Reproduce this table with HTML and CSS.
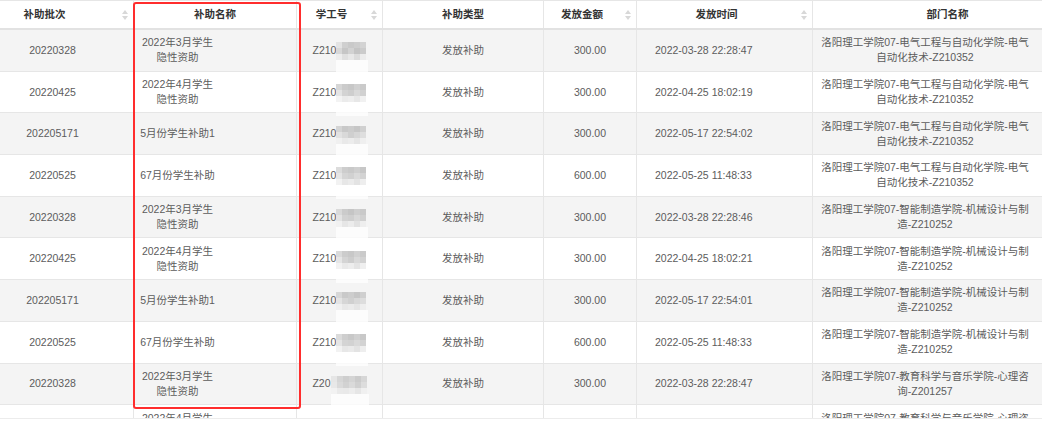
FILE: index.html
```html
<!DOCTYPE html>
<html lang="zh-CN">
<head>
<meta charset="utf-8">
<title>补助发放记录</title>
<link rel="stylesheet" href="styles.css">
</head>
<body>
<div class="page">
  <div class="grid-table">
    <div class="row head">
      <div class="cell sortable"><span class="label">补助批次</span><span class="sort"><svg width="6" height="10" viewBox="0 0 6 10"><path d="M3 0L6 4H0Z"/><path d="M0 6H6L3 10Z"/></svg></span></div>
      <div class="cell">补助名称</div>
      <div class="cell sortable"><span class="label">学工号</span><span class="sort"><svg width="6" height="10" viewBox="0 0 6 10"><path d="M3 0L6 4H0Z"/><path d="M0 6H6L3 10Z"/></svg></span></div>
      <div class="cell">补助类型</div>
      <div class="cell sortable"><span class="label">发放金额</span><span class="sort"><svg width="6" height="10" viewBox="0 0 6 10"><path d="M3 0L6 4H0Z"/><path d="M0 6H6L3 10Z"/></svg></span></div>
      <div class="cell sortable"><span class="label">发放时间</span><span class="sort"><svg width="6" height="10" viewBox="0 0 6 10"><path d="M3 0L6 4H0Z"/><path d="M0 6H6L3 10Z"/></svg></span></div>
      <div class="cell">部门名称</div>
    </div>

    <div class="row data">
      <div class="cell">20220328</div>
      <div class="cell name"><div class="wrap">2022年3月学生隐性资助</div></div>
      <div class="cell">Z210<svg class="mosaic" width="30" height="18" viewBox="0 0 30 18"><rect x="0" y="18" width="32" height="14" fill="#fff" opacity=".75"/><rect x="0" y="0" width="6" height="6" fill="#e3e3e3"/><rect x="6" y="0" width="6" height="6" fill="#cfcfcf"/><rect x="12" y="0" width="6" height="6" fill="#c9c9c9"/><rect x="18" y="0" width="6" height="6" fill="#cdcdcd"/><rect x="24" y="0" width="6" height="6" fill="#d3d3d3"/><rect x="0" y="6" width="6" height="6" fill="#d8d8d8"/><rect x="6" y="6" width="6" height="6" fill="#c6c6c6"/><rect x="12" y="6" width="6" height="6" fill="#d2d2d2"/><rect x="18" y="6" width="6" height="6" fill="#c4c4c4"/><rect x="24" y="6" width="6" height="6" fill="#cbcbcb"/><rect x="0" y="12" width="6" height="6" fill="#ededed"/><rect x="6" y="12" width="6" height="6" fill="#e0e0e0"/><rect x="12" y="12" width="6" height="6" fill="#e8e8e8"/><rect x="18" y="12" width="6" height="6" fill="#dcdcdc"/><rect x="24" y="12" width="6" height="6" fill="#ececec"/></svg></div>
      <div class="cell">发放补助</div>
      <div class="cell">300.00</div>
      <div class="cell time">2022-03-28 22:28:47</div>
      <div class="cell dept"><div class="wrap">洛阳理工学院07-电气工程与自动化学院-电气自动化技术-Z210352</div></div>
    </div>

    <div class="row data">
      <div class="cell">20220425</div>
      <div class="cell name"><div class="wrap">2022年4月学生隐性资助</div></div>
      <div class="cell">Z210<svg class="mosaic" width="30" height="18" viewBox="0 0 30 18"><rect x="0" y="18" width="32" height="14" fill="#fff" opacity=".75"/><rect x="0" y="0" width="6" height="6" fill="#d6d6d6"/><rect x="6" y="0" width="6" height="6" fill="#cbcbcb"/><rect x="12" y="0" width="6" height="6" fill="#c7c7c7"/><rect x="18" y="0" width="6" height="6" fill="#d0d0d0"/><rect x="24" y="0" width="6" height="6" fill="#cacaca"/><rect x="0" y="6" width="6" height="6" fill="#e4e4e4"/><rect x="6" y="6" width="6" height="6" fill="#d3d3d3"/><rect x="12" y="6" width="6" height="6" fill="#cecece"/><rect x="18" y="6" width="6" height="6" fill="#d9d9d9"/><rect x="24" y="6" width="6" height="6" fill="#d1d1d1"/><rect x="0" y="12" width="6" height="6" fill="#f3f3f3"/><rect x="6" y="12" width="6" height="6" fill="#ebebeb"/><rect x="12" y="12" width="6" height="6" fill="#eeeeee"/><rect x="18" y="12" width="6" height="6" fill="#e7e7e7"/><rect x="24" y="12" width="6" height="6" fill="#f1f1f1"/></svg></div>
      <div class="cell">发放补助</div>
      <div class="cell">300.00</div>
      <div class="cell time">2022-04-25 18:02:19</div>
      <div class="cell dept"><div class="wrap">洛阳理工学院07-电气工程与自动化学院-电气自动化技术-Z210352</div></div>
    </div>

    <div class="row data">
      <div class="cell">202205171</div>
      <div class="cell name"><div class="wrap">5月份学生补助1</div></div>
      <div class="cell">Z210<svg class="mosaic" width="30" height="18" viewBox="0 0 30 18"><rect x="0" y="18" width="32" height="14" fill="#fff" opacity=".75"/><rect x="0" y="0" width="6" height="6" fill="#d4d4d4"/><rect x="6" y="0" width="6" height="6" fill="#c8c8c8"/><rect x="12" y="0" width="6" height="6" fill="#cccccc"/><rect x="18" y="0" width="6" height="6" fill="#c6c6c6"/><rect x="24" y="0" width="6" height="6" fill="#d0d0d0"/><rect x="0" y="6" width="6" height="6" fill="#e2e2e2"/><rect x="6" y="6" width="6" height="6" fill="#d9d9d9"/><rect x="12" y="6" width="6" height="6" fill="#cfcfcf"/><rect x="18" y="6" width="6" height="6" fill="#d6d6d6"/><rect x="24" y="6" width="6" height="6" fill="#dedede"/><rect x="0" y="12" width="6" height="6" fill="#f0f0f0"/><rect x="6" y="12" width="6" height="6" fill="#e9e9e9"/><rect x="12" y="12" width="6" height="6" fill="#ececec"/><rect x="18" y="12" width="6" height="6" fill="#e5e5e5"/><rect x="24" y="12" width="6" height="6" fill="#efefef"/></svg></div>
      <div class="cell">发放补助</div>
      <div class="cell">300.00</div>
      <div class="cell time">2022-05-17 22:54:02</div>
      <div class="cell dept"><div class="wrap">洛阳理工学院07-电气工程与自动化学院-电气自动化技术-Z210352</div></div>
    </div>

    <div class="row data">
      <div class="cell">20220525</div>
      <div class="cell name"><div class="wrap">67月份学生补助</div></div>
      <div class="cell">Z210<svg class="mosaic" width="30" height="18" viewBox="0 0 30 18"><rect x="0" y="18" width="32" height="14" fill="#fff" opacity=".75"/><rect x="0" y="0" width="6" height="6" fill="#dcdcdc"/><rect x="6" y="0" width="6" height="6" fill="#cdcdcd"/><rect x="12" y="0" width="6" height="6" fill="#c9c9c9"/><rect x="18" y="0" width="6" height="6" fill="#cfcfcf"/><rect x="24" y="0" width="6" height="6" fill="#c7c7c7"/><rect x="0" y="6" width="6" height="6" fill="#e5e5e5"/><rect x="6" y="6" width="6" height="6" fill="#d5d5d5"/><rect x="12" y="6" width="6" height="6" fill="#d1d1d1"/><rect x="18" y="6" width="6" height="6" fill="#dadada"/><rect x="24" y="6" width="6" height="6" fill="#d3d3d3"/><rect x="0" y="12" width="6" height="6" fill="#f2f2f2"/><rect x="6" y="12" width="6" height="6" fill="#e7e7e7"/><rect x="12" y="12" width="6" height="6" fill="#ebebeb"/><rect x="18" y="12" width="6" height="6" fill="#e3e3e3"/><rect x="24" y="12" width="6" height="6" fill="#eeeeee"/></svg></div>
      <div class="cell">发放补助</div>
      <div class="cell">600.00</div>
      <div class="cell time">2022-05-25 11:48:33</div>
      <div class="cell dept"><div class="wrap">洛阳理工学院07-电气工程与自动化学院-电气自动化技术-Z210352</div></div>
    </div>

    <div class="row data">
      <div class="cell">20220328</div>
      <div class="cell name"><div class="wrap">2022年3月学生隐性资助</div></div>
      <div class="cell">Z210<svg class="mosaic" width="30" height="18" viewBox="0 0 30 18"><rect x="0" y="18" width="32" height="14" fill="#fff" opacity=".75"/><rect x="0" y="0" width="6" height="6" fill="#d9d9d9"/><rect x="6" y="0" width="6" height="6" fill="#cbcbcb"/><rect x="12" y="0" width="6" height="6" fill="#c5c5c5"/><rect x="18" y="0" width="6" height="6" fill="#cecece"/><rect x="24" y="0" width="6" height="6" fill="#c9c9c9"/><rect x="0" y="6" width="6" height="6" fill="#e3e3e3"/><rect x="6" y="6" width="6" height="6" fill="#d2d2d2"/><rect x="12" y="6" width="6" height="6" fill="#cfcfcf"/><rect x="18" y="6" width="6" height="6" fill="#d8d8d8"/><rect x="24" y="6" width="6" height="6" fill="#d0d0d0"/><rect x="0" y="12" width="6" height="6" fill="#f1f1f1"/><rect x="6" y="12" width="6" height="6" fill="#e6e6e6"/><rect x="12" y="12" width="6" height="6" fill="#ececec"/><rect x="18" y="12" width="6" height="6" fill="#e2e2e2"/><rect x="24" y="12" width="6" height="6" fill="#eeeeee"/></svg></div>
      <div class="cell">发放补助</div>
      <div class="cell">300.00</div>
      <div class="cell time">2022-03-28 22:28:46</div>
      <div class="cell dept"><div class="wrap">洛阳理工学院07-智能制造学院-机械设计与制造-Z210252</div></div>
    </div>

    <div class="row data">
      <div class="cell">20220425</div>
      <div class="cell name"><div class="wrap">2022年4月学生隐性资助</div></div>
      <div class="cell">Z210<svg class="mosaic" width="30" height="18" viewBox="0 0 30 18"><rect x="0" y="18" width="32" height="14" fill="#fff" opacity=".75"/><rect x="0" y="0" width="6" height="6" fill="#dadada"/><rect x="6" y="0" width="6" height="6" fill="#cccccc"/><rect x="12" y="0" width="6" height="6" fill="#c8c8c8"/><rect x="18" y="0" width="6" height="6" fill="#d1d1d1"/><rect x="24" y="0" width="6" height="6" fill="#cacaca"/><rect x="0" y="6" width="6" height="6" fill="#e6e6e6"/><rect x="6" y="6" width="6" height="6" fill="#d4d4d4"/><rect x="12" y="6" width="6" height="6" fill="#cdcdcd"/><rect x="18" y="6" width="6" height="6" fill="#d9d9d9"/><rect x="24" y="6" width="6" height="6" fill="#d2d2d2"/><rect x="0" y="12" width="6" height="6" fill="#f2f2f2"/><rect x="6" y="12" width="6" height="6" fill="#e9e9e9"/><rect x="12" y="12" width="6" height="6" fill="#ededed"/><rect x="18" y="12" width="6" height="6" fill="#e4e4e4"/><rect x="24" y="12" width="6" height="6" fill="#efefef"/></svg></div>
      <div class="cell">发放补助</div>
      <div class="cell">300.00</div>
      <div class="cell time">2022-04-25 18:02:21</div>
      <div class="cell dept"><div class="wrap">洛阳理工学院07-智能制造学院-机械设计与制造-Z210252</div></div>
    </div>

    <div class="row data">
      <div class="cell">202205171</div>
      <div class="cell name"><div class="wrap">5月份学生补助1</div></div>
      <div class="cell">Z210<svg class="mosaic" width="30" height="18" viewBox="0 0 30 18"><rect x="0" y="18" width="32" height="14" fill="#fff" opacity=".75"/><rect x="0" y="0" width="6" height="6" fill="#d7d7d7"/><rect x="6" y="0" width="6" height="6" fill="#c9c9c9"/><rect x="12" y="0" width="6" height="6" fill="#cdcdcd"/><rect x="18" y="0" width="6" height="6" fill="#c6c6c6"/><rect x="24" y="0" width="6" height="6" fill="#cfcfcf"/><rect x="0" y="6" width="6" height="6" fill="#e4e4e4"/><rect x="6" y="6" width="6" height="6" fill="#d6d6d6"/><rect x="12" y="6" width="6" height="6" fill="#d0d0d0"/><rect x="18" y="6" width="6" height="6" fill="#d8d8d8"/><rect x="24" y="6" width="6" height="6" fill="#dddddd"/><rect x="0" y="12" width="6" height="6" fill="#f0f0f0"/><rect x="6" y="12" width="6" height="6" fill="#e8e8e8"/><rect x="12" y="12" width="6" height="6" fill="#ebebeb"/><rect x="18" y="12" width="6" height="6" fill="#e5e5e5"/><rect x="24" y="12" width="6" height="6" fill="#eeeeee"/></svg></div>
      <div class="cell">发放补助</div>
      <div class="cell">300.00</div>
      <div class="cell time">2022-05-17 22:54:01</div>
      <div class="cell dept"><div class="wrap">洛阳理工学院07-智能制造学院-机械设计与制造-Z210252</div></div>
    </div>

    <div class="row data">
      <div class="cell">20220525</div>
      <div class="cell name"><div class="wrap">67月份学生补助</div></div>
      <div class="cell">Z210<svg class="mosaic" width="30" height="18" viewBox="0 0 30 18"><rect x="0" y="18" width="32" height="14" fill="#fff" opacity=".75"/><rect x="0" y="0" width="6" height="6" fill="#dbdbdb"/><rect x="6" y="0" width="6" height="6" fill="#cecece"/><rect x="12" y="0" width="6" height="6" fill="#c8c8c8"/><rect x="18" y="0" width="6" height="6" fill="#d0d0d0"/><rect x="24" y="0" width="6" height="6" fill="#c8c8c8"/><rect x="0" y="6" width="6" height="6" fill="#e5e5e5"/><rect x="6" y="6" width="6" height="6" fill="#d4d4d4"/><rect x="12" y="6" width="6" height="6" fill="#d2d2d2"/><rect x="18" y="6" width="6" height="6" fill="#d9d9d9"/><rect x="24" y="6" width="6" height="6" fill="#d3d3d3"/><rect x="0" y="12" width="6" height="6" fill="#f2f2f2"/><rect x="6" y="12" width="6" height="6" fill="#e7e7e7"/><rect x="12" y="12" width="6" height="6" fill="#eaeaea"/><rect x="18" y="12" width="6" height="6" fill="#e3e3e3"/><rect x="24" y="12" width="6" height="6" fill="#eeeeee"/></svg></div>
      <div class="cell">发放补助</div>
      <div class="cell">600.00</div>
      <div class="cell time">2022-05-25 11:48:33</div>
      <div class="cell dept"><div class="wrap">洛阳理工学院07-智能制造学院-机械设计与制造-Z210252</div></div>
    </div>

    <div class="row data">
      <div class="cell">20220328</div>
      <div class="cell name"><div class="wrap">2022年3月学生隐性资助</div></div>
      <div class="cell">Z20<svg class="mosaic" width="36" height="18" viewBox="0 0 36 18"><rect x="0" y="18" width="38" height="14" fill="#fff" opacity=".75"/><rect x="0" y="0" width="6" height="6" fill="#e6e6e6"/><rect x="6" y="0" width="6" height="6" fill="#d6d6d6"/><rect x="12" y="0" width="6" height="6" fill="#cecece"/><rect x="18" y="0" width="6" height="6" fill="#d4d4d4"/><rect x="24" y="0" width="6" height="6" fill="#cbcbcb"/><rect x="30" y="0" width="6" height="6" fill="#d6d6d6"/><rect x="0" y="6" width="6" height="6" fill="#e8e8e8"/><rect x="6" y="6" width="6" height="6" fill="#dadada"/><rect x="12" y="6" width="6" height="6" fill="#d2d2d2"/><rect x="18" y="6" width="6" height="6" fill="#dadada"/><rect x="24" y="6" width="6" height="6" fill="#d0d0d0"/><rect x="30" y="6" width="6" height="6" fill="#dddddd"/><rect x="0" y="12" width="6" height="6" fill="#f2f2f2"/><rect x="6" y="12" width="6" height="6" fill="#eaeaea"/><rect x="12" y="12" width="6" height="6" fill="#e9e9e9"/><rect x="18" y="12" width="6" height="6" fill="#ededed"/><rect x="24" y="12" width="6" height="6" fill="#e6e6e6"/><rect x="30" y="12" width="6" height="6" fill="#f0f0f0"/></svg></div>
      <div class="cell">发放补助</div>
      <div class="cell">300.00</div>
      <div class="cell time">2022-03-28 22:28:47</div>
      <div class="cell dept"><div class="wrap">洛阳理工学院07-教育科学与音乐学院-心理咨询-Z201257</div></div>
    </div>

    <div class="row data">
      <div class="cell"></div>
      <div class="cell name"><div class="wrap">2022年4月学生隐性资助</div></div>
      <div class="cell"></div>
      <div class="cell"></div>
      <div class="cell"></div>
      <div class="cell time"></div>
      <div class="cell dept"><div class="wrap">洛阳理工学院07-教育科学与音乐学院-心理咨询-Z201257</div></div>
    </div>
  </div>
  <div class="highlight"></div>
</div>
</body>
</html>
```

FILE: styles.css
```css
* {
  box-sizing: border-box;
}

html, body {
  margin: 0;
  padding: 0;
  background: #fff;
}

body {
  overflow: hidden;
  font-family: "Liberation Sans", "Noto Sans CJK SC", sans-serif;
  font-size: 10.5px;
  color: #5c5c5c;
}

.page {
  position: relative;
  width: 1042px;
  height: 425px;
  overflow: hidden;
}

.grid-table {
  margin-left: -28px;
  width: 1111px;
  height: 419px;
  overflow: hidden;
  border-bottom: 1px solid #ececec;
}

.row {
  display: grid;
  grid-template-columns: 162px 163px 86px 161px 93px 176px 270px;
}

.cell {
  display: flex;
  align-items: center;
  justify-content: center;
  border-right: 1px solid #e6e6e6;
  line-height: 15px;
  white-space: nowrap;
}

.head {
  height: 30px;
  border-top: 1px solid #e6e6e6;
  border-bottom: 2px solid #e2e2e2;
  background: #fff;
}

.head .cell {
  font-weight: bold;
  color: #333;
}

.sortable {
  justify-content: space-between;
}

.sortable .label {
  flex: 1;
  text-align: center;
}

.sort {
  width: 16px;
  display: flex;
  align-items: center;
  justify-content: center;
}

.sort svg {
  display: block;
  fill: #d8d8d8;
}

.data {
  height: 41.7px;
  border-bottom: 1px solid #e6e6e6;
  background: #fff;
}

.data:nth-child(even) {
  background: #f4f4f4;
}

.data .name {
  justify-content: flex-start;
  padding-left: 5px;
}

.data .dept {
  justify-content: flex-start;
  padding-left: 6px;
}

.wrap {
  white-space: normal;
  text-align: center;
}

.name .wrap {
  width: 77px;
}

.dept .wrap {
  width: 212px;
}

.data .time {
  justify-content: flex-start;
  padding-left: 18px;
}

.mosaic {
  display: block;
  overflow: visible;
  margin-top: 2px;
}

.highlight {
  position: absolute;
  left: 133px;
  top: 2px;
  width: 168px;
  height: 407px;
  border: 2px solid #ff2d2d;
  border-radius: 3px;
}
```
